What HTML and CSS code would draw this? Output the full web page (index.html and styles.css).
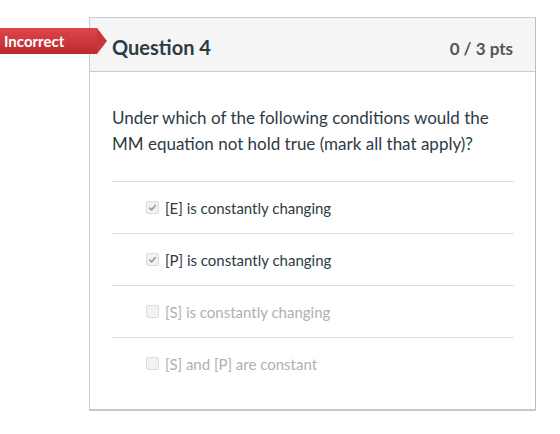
FILE: index.html
```html
<!DOCTYPE html>
<html>
<head>
<meta charset="utf-8">
<link rel="stylesheet" href="styles.css">
</head>
<body>
<div class="page">
  <div class="flag">Incorrect</div>
  <div class="question">
    <div class="q-header">
      <span class="q-title">Question 4</span>
      <span class="q-points">0 / 3 pts</span>
    </div>
    <div class="q-body">
      <p class="q-text">Under which of the following conditions would the MM equation not hold true (mark all that apply)?</p>
      <ul class="answers">
        <li class="answer checked"><span class="box"><svg viewBox="0 0 10 10" width="9" height="9"><path d="M1.5 5.2 L4 7.6 L8.6 2.2" fill="none" stroke="#9a9a9a" stroke-width="1.8"/></svg></span>[E] is constantly changing</li>
        <li class="answer checked"><span class="box"><svg viewBox="0 0 10 10" width="9" height="9"><path d="M1.5 5.2 L4 7.6 L8.6 2.2" fill="none" stroke="#9a9a9a" stroke-width="1.8"/></svg></span>[P] is constantly changing</li>
        <li class="answer"><span class="box"></span>[S] is constantly changing</li>
        <li class="answer"><span class="box"></span>[S] and [P] are constant</li>
      </ul>
    </div>
  </div>
</div>
</body>
</html>
```

FILE: styles.css
```css
html, body {
  margin: 0;
  padding: 0;
  background: #fff;
}

body {
  font-family: Lato, "Open Sans", sans-serif;
  color: #2d3b45;
}

.page {
  position: relative;
  padding: 17px 0 0 89px;
}

.flag {
  position: absolute;
  left: 0;
  top: 28px;
  height: 26px;
  width: 97px;
  box-sizing: border-box;
  padding-left: 4px;
  line-height: 26px;
  font-size: 15px;
  font-weight: 700;
  color: #fff;
  background: linear-gradient(#e0454b, #b92a2f);
}

.flag::after {
  content: "";
  position: absolute;
  left: 97px;
  top: 0;
  border-top: 13px solid transparent;
  border-bottom: 13px solid transparent;
  border-left: 10px solid #cb363c;
}

.question {
  width: 447px;
  box-sizing: border-box;
  border: 1px solid #c7cdd1;
  border-right-color: #bdbdbd;
  border-bottom: 2px solid #c8c8c8;
  background: #fff;
}

.q-header {
  display: flex;
  justify-content: space-between;
  align-items: baseline;
  height: 54px;
  box-sizing: border-box;
  padding: 17px 22px 0 22px;
  background: #f5f5f5;
  border-bottom: 1px solid #c7cdd1;
}

.q-title {
  font-size: 20px;
  font-weight: 700;
  color: #2d3b45;
}

.q-points {
  font-size: 17px;
  font-weight: 700;
  color: #555;
}

.q-body {
  padding: 33px 21px 20px 22px;
}

.q-text {
  margin: 0 0 24px;
  font-size: 17px;
  line-height: 26px;
}

.answers {
  list-style: none;
  margin: 0;
  padding: 0;
}

.answer {
  display: flex;
  align-items: center;
  height: 51px;
  padding-left: 34px;
  border-top: 1px solid #dedede;
  font-size: 15px;
  color: #aeb1b4;
}

.answer.checked {
  color: #2d3b45;
}

.box {
  display: inline-flex;
  align-items: center;
  justify-content: center;
  width: 11px;
  height: 11px;
  margin-right: 6px;
  border: 1px solid #dcdcdc;
  border-radius: 2px;
  background: #f2f2f2;
}
```
